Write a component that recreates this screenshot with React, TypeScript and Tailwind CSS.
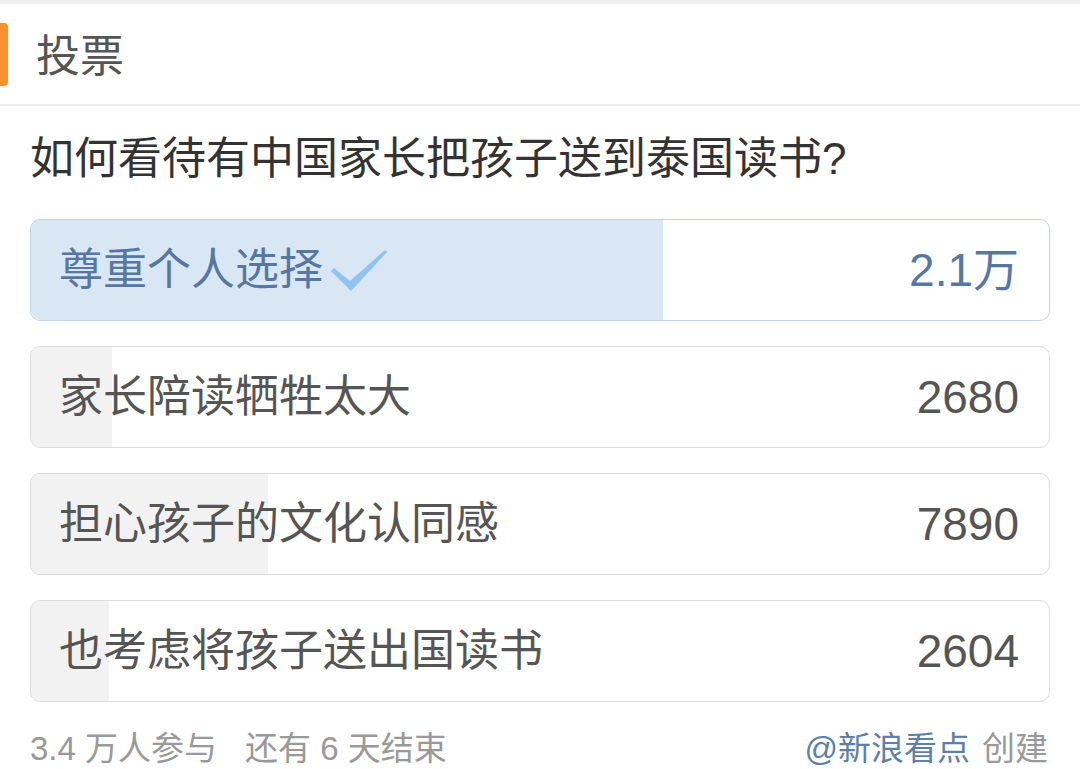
import React from 'react';

interface PollOption {
  label: string;
  votes: number;
  display: string;
}

// 投票数据
const options: PollOption[] = [
  { label: '尊重个人选择', votes: 21000, display: '2.1万' },
  { label: '家长陪读牺牲太大', votes: 2680, display: '2680' },
  { label: '担心孩子的文化认同感', votes: 7890, display: '7890' },
  { label: '也考虑将孩子送出国读书', votes: 2604, display: '2604' },
];

const total = options.reduce((sum, o) => sum + o.votes, 0);
const votedIndex = 0;

const font = { fontFamily: '"Liberation Sans", "Noto Sans CJK SC", sans-serif' };

function CheckMark() {
  return (
    <svg width="60" height="48" viewBox="0 0 60 48" className="ml-[6px] mt-[2px]">
      <path d="M2 24 L5 21 L21 34 L56 3 L58 5 L22 44 Z" fill="#8fc4f2" />
    </svg>
  );
}

export default function App() {
  return (
    <div className="w-[1080px] h-[769px] bg-white overflow-hidden text-[#333]" style={font}>
      <div className="h-[4px] bg-[#efefef]" />

      {/* 标题 */}
      <div className="flex items-center h-[102px] border-b-2 border-[#f0f0f0]">
        <div className="w-[8px] h-[63px] rounded-r-[4px] bg-[#f7922e]" />
        <span className="ml-[28px] pt-[6px] text-[44px] leading-none text-[#555]">投票</span>
      </div>

      {/* 问题 */}
      <div className="px-[30px] pt-[24px] text-[44px] leading-[58px] text-[#333]">
        如何看待有中国家长把孩子送到泰国读书?
      </div>

      {/* 选项 */}
      <div className="mt-[31px] mx-[30px] flex flex-col gap-[25px]">
        {options.map((opt, i) => {
          const voted = i === votedIndex;
          return (
            <div
              key={i}
              className={`relative h-[102px] rounded-[10px] border overflow-hidden ${
                voted ? 'border-[#bcd5ea]' : 'border-[#dcdcdc]'
              }`}
            >
              <div
                className={`absolute inset-y-0 left-0 ${voted ? 'bg-[#d9e6f3]' : 'bg-[#f2f2f2]'}`}
                style={{ width: `${Math.min(100, (opt.votes / total) * 101)}%` }}
              />
              <div className="relative flex items-center justify-between h-full pl-[28px] pr-[30px]">
                <div className="flex items-center">
                  <span className={`text-[44px] leading-none ${voted ? 'text-[#5677a2]' : 'text-[#555]'}`}>
                    {opt.label}
                  </span>
                  {voted && <CheckMark />}
                </div>
                <span className={`text-[46px] leading-none ${voted ? 'text-[#5677a2]' : 'text-[#555]'}`}>
                  {opt.display}
                </span>
              </div>
            </div>
          );
        })}
      </div>

      {/* 底部 */}
      <div className="mt-[31px] px-[30px] flex items-center justify-between leading-[32px] text-[33px] text-[#999]">
        <div>
          <span>3.4 万人参与</span>
          <span className="ml-[28px]">还有 6 天结束</span>
        </div>
        <div className="mr-[2px]">
          <span className="text-[#5d7fa9]">@新浪看点</span>
          <span className="ml-[12px]">创建</span>
        </div>
      </div>
    </div>
  );
}
